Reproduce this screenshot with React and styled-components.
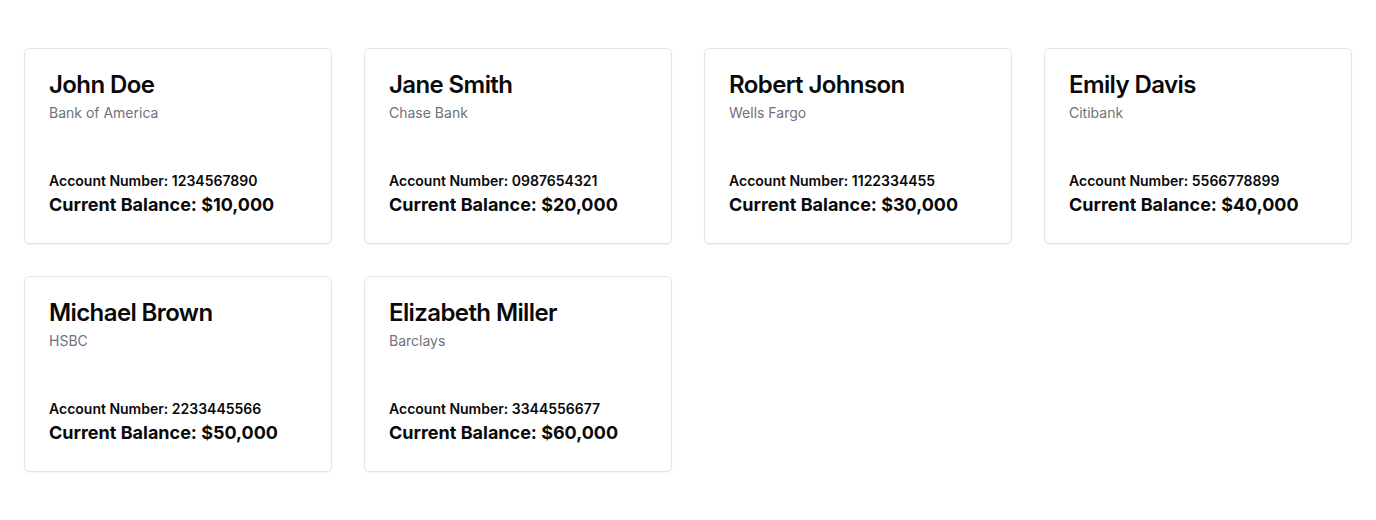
import React from "react";
import styled, { createGlobalStyle } from "styled-components";

const GlobalStyle = createGlobalStyle`
  * { box-sizing: border-box; }
  body {
    margin: 0;
    background: #ffffff;
    font-family: Inter, "Noto Sans", sans-serif;
    color: #09090b;
  }
`;

const Page = styled.div`
  padding: 48px 24px;
`;

const Grid = styled.div`
  display: grid;
  grid-template-columns: repeat(4, 1fr);
  gap: 32px;
`;

const Card = styled.div`
  border: 1px solid #e4e4e7;
  border-radius: 6px;
  background: #fff;
  box-shadow: 0 1px 2px rgba(0, 0, 0, 0.05);
`;

const Header = styled.div`
  display: flex;
  flex-direction: column;
  gap: 6px;
  padding: 24px;
`;

const Title = styled.h3`
  margin: 0;
  font-size: 24px;
  line-height: 24px;
  font-weight: 600;
  letter-spacing: -0.025em;
`;

const Bank = styled.p`
  margin: 0;
  font-size: 14px;
  line-height: 20px;
  color: #71717a;
`;

const Content = styled.div`
  padding: 24px;
`;

const AccountNo = styled.p`
  margin: 0;
  font-size: 14px;
  line-height: 20px;
  font-weight: 600;
`;

const Balance = styled.p`
  margin: 0;
  font-size: 18px;
  line-height: 28px;
  font-weight: 700;
`;

const accounts = [
  { name: "John Doe", bank: "Bank of America", number: "1234567890", balance: "$10,000" },
  { name: "Jane Smith", bank: "Chase Bank", number: "0987654321", balance: "$20,000" },
  { name: "Robert Johnson", bank: "Wells Fargo", number: "1122334455", balance: "$30,000" },
  { name: "Emily Davis", bank: "Citibank", number: "5566778899", balance: "$40,000" },
  { name: "Michael Brown", bank: "HSBC", number: "2233445566", balance: "$50,000" },
  { name: "Elizabeth Miller", bank: "Barclays", number: "3344556677", balance: "$60,000" },
];

function App() {
  return (
    <>
      <GlobalStyle />
      <Page>
        <Grid>
          {accounts.map((a) => (
            <Card key={a.number}>
              <Header>
                <Title>{a.name}</Title>
                <Bank>{a.bank}</Bank>
              </Header>
              <Content>
                <AccountNo>Account Number: {a.number}</AccountNo>
                <Balance>Current Balance: {a.balance}</Balance>
              </Content>
            </Card>
          ))}
        </Grid>
      </Page>
    </>
  );
}

export default App;
